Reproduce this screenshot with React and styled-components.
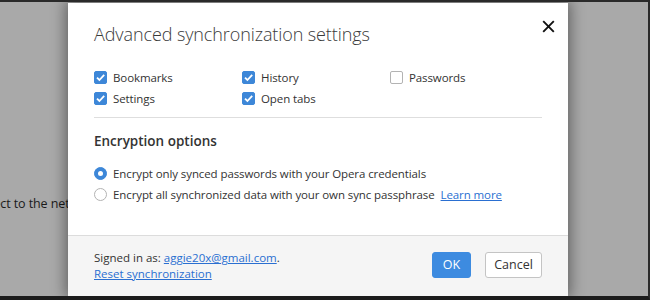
import React from "react";
import styled, { createGlobalStyle } from "styled-components";

const Global = createGlobalStyle`
  html, body { margin: 0; padding: 0; width: 650px; height: 300px; overflow: hidden; }
  body { font-family: "Open Sans", "Noto Sans", sans-serif; }
  * { box-sizing: border-box; }
`;

const Screen = styled.div`
  position: relative;
  width: 650px;
  height: 300px;
  background: #a9a9a9;
  border-top: 2px solid #2a2a2a;
  border-right: 2px solid #2a2a2a;
  border-bottom: 4px solid #1c1c1c;
  overflow: hidden;
`;

const BackText = styled.p`
  margin: 193px 0 0 -94px;
  font-size: 12.5px;
  letter-spacing: -0.1px;
  color: #1a1a1a;
  white-space: nowrap;
`;

const Dialog = styled.div`
  position: absolute;
  left: 68px;
  top: 1px;
  width: 500px;
  height: 293px;
  background: #fff;
  box-shadow: 0 0 14px 2px rgba(0, 0, 0, 0.45);
  display: flex;
  flex-direction: column;
`;

const Body = styled.div`
  flex: 1;
  padding: 18px 26px 0 26px;
  display: flex;
  flex-direction: column;
`;

const Header = styled.div`
  display: flex;
  justify-content: space-between;
  align-items: flex-start;
`;

const Title = styled.h1`
  margin: 0;
  font-weight: 300;
  font-size: 18px;
  letter-spacing: -0.1px;
  line-height: 26px;
  color: #3a3a3a;
`;

const Close = styled.button`
  border: 0;
  background: none;
  padding: 0;
  margin: -2px -13px 0 0;
  width: 14px;
  height: 14px;
  display: flex;
  align-items: center;
  justify-content: center;
`;

const Options = styled.div`
  display: grid;
  grid-template-columns: 148px 148px 148px;
  row-gap: 6px;
  margin-top: 23px;
`;

const Label = styled.label`
  display: flex;
  align-items: center;
  gap: 6px;
  font-size: 11.5px;
  letter-spacing: -0.1px;
  line-height: 15px;
  color: #333;
  white-space: nowrap;
`;

const Box = styled.span`
  width: 13px;
  height: 13px;
  border-radius: 2px;
  flex: none;
  display: flex;
  align-items: center;
  justify-content: center;
  background: ${(p) => (p.$checked ? "#3d87d8" : "#fff")};
  border: 1px solid ${(p) => (p.$checked ? "#3d87d8" : "#b3b3b3")};
`;

const Divider = styled.hr`
  margin: 11px 0 0 0;
  border: 0;
  border-top: 1px solid #dedede;
`;

const Section = styled.h2`
  margin: 14px 0 0 0;
  font-size: 13.5px;
  font-weight: 600;
  line-height: 18px;
  color: #333;
`;

const Radios = styled.div`
  display: flex;
  flex-direction: column;
  gap: 6px;
  margin-top: 16px;
`;

const Radio = styled.span`
  width: 13px;
  height: 13px;
  border-radius: 50%;
  flex: none;
  background: ${(p) => (p.$checked ? "#3d87d8" : "#fff")};
  border: 1px solid ${(p) => (p.$checked ? "#3d87d8" : "#b3b3b3")};
  display: flex;
  align-items: center;
  justify-content: center;
  &::after {
    content: "";
    display: ${(p) => (p.$checked ? "block" : "none")};
    width: 5px;
    height: 5px;
    border-radius: 50%;
    background: #fff;
  }
`;

const Link = styled.a`
  color: #2a6fd1;
  text-decoration: underline;
`;

const Footer = styled.div`
  height: 61px;
  background: #f5f5f5;
  border-top: 1px solid #dcdcdc;
  display: flex;
  align-items: center;
  justify-content: space-between;
  padding: 0 26px;
`;

const Account = styled.div`
  font-size: 11.5px;
  line-height: 16px;
  color: #333;
  a { color: #2a6fd1; text-decoration: underline; }
`;

const Buttons = styled.div`
  display: flex;
  gap: 14px;
  margin-top: -3px;
`;

const Button = styled.button`
  height: 26px;
  width: ${(p) => (p.$primary ? "39px" : "57px")};
  padding: 0;
  border-radius: 3px;
  font-family: inherit;
  font-size: 12.5px;
  border: 1px solid ${(p) => (p.$primary ? "#3d8be0" : "#c4c4c4")};
  background: ${(p) => (p.$primary ? "#3d8be0" : "#fff")};
  color: ${(p) => (p.$primary ? "#fff" : "#333")};
`;

const Check = () => (
  <svg width="11" height="11" viewBox="0 0 11 11">
    <path d="M2 5.6 L4.4 8 L9.2 2.8" fill="none" stroke="#fff" strokeWidth="1.8" />
  </svg>
);

const Option = ({ label, checked }) => (
  <Label>
    <Box $checked={checked}>{checked && <Check />}</Box>
    {label}
  </Label>
);

export default function App() {
  return (
    <>
      <Global />
      <Screen>
        <BackText aria-hidden="true">Unable to connect to the network.</BackText>
        <Dialog>
          <Body>
            <Header>
              <Title>Advanced synchronization settings</Title>
              <Close aria-label="Close">
                <svg width="13" height="13" viewBox="0 0 13 13">
                  <path d="M1.2 1.2 L11.8 11.8 M11.8 1.2 L1.2 11.8" stroke="#111" strokeWidth="1.9" />
                </svg>
              </Close>
            </Header>
            <Options>
              <Option label="Bookmarks" checked />
              <Option label="History" checked />
              <Option label="Passwords" />
              <Option label="Settings" checked />
              <Option label="Open tabs" checked />
            </Options>
            <Divider />
            <Section>Encryption options</Section>
            <Radios>
              <Label>
                <Radio $checked />
                Encrypt only synced passwords with your Opera credentials
              </Label>
              <Label>
                <Radio />
                Encrypt all synchronized data with your own sync passphrase
                <Link href="#">Learn more</Link>
              </Label>
            </Radios>
          </Body>
          <Footer>
            <Account>
              Signed in as: <a href="#">aggie20x@gmail.com</a>.
              <br />
              <a href="#">Reset synchronization</a>
            </Account>
            <Buttons>
              <Button $primary>OK</Button>
              <Button>Cancel</Button>
            </Buttons>
          </Footer>
        </Dialog>
      </Screen>
    </>
  );
}
